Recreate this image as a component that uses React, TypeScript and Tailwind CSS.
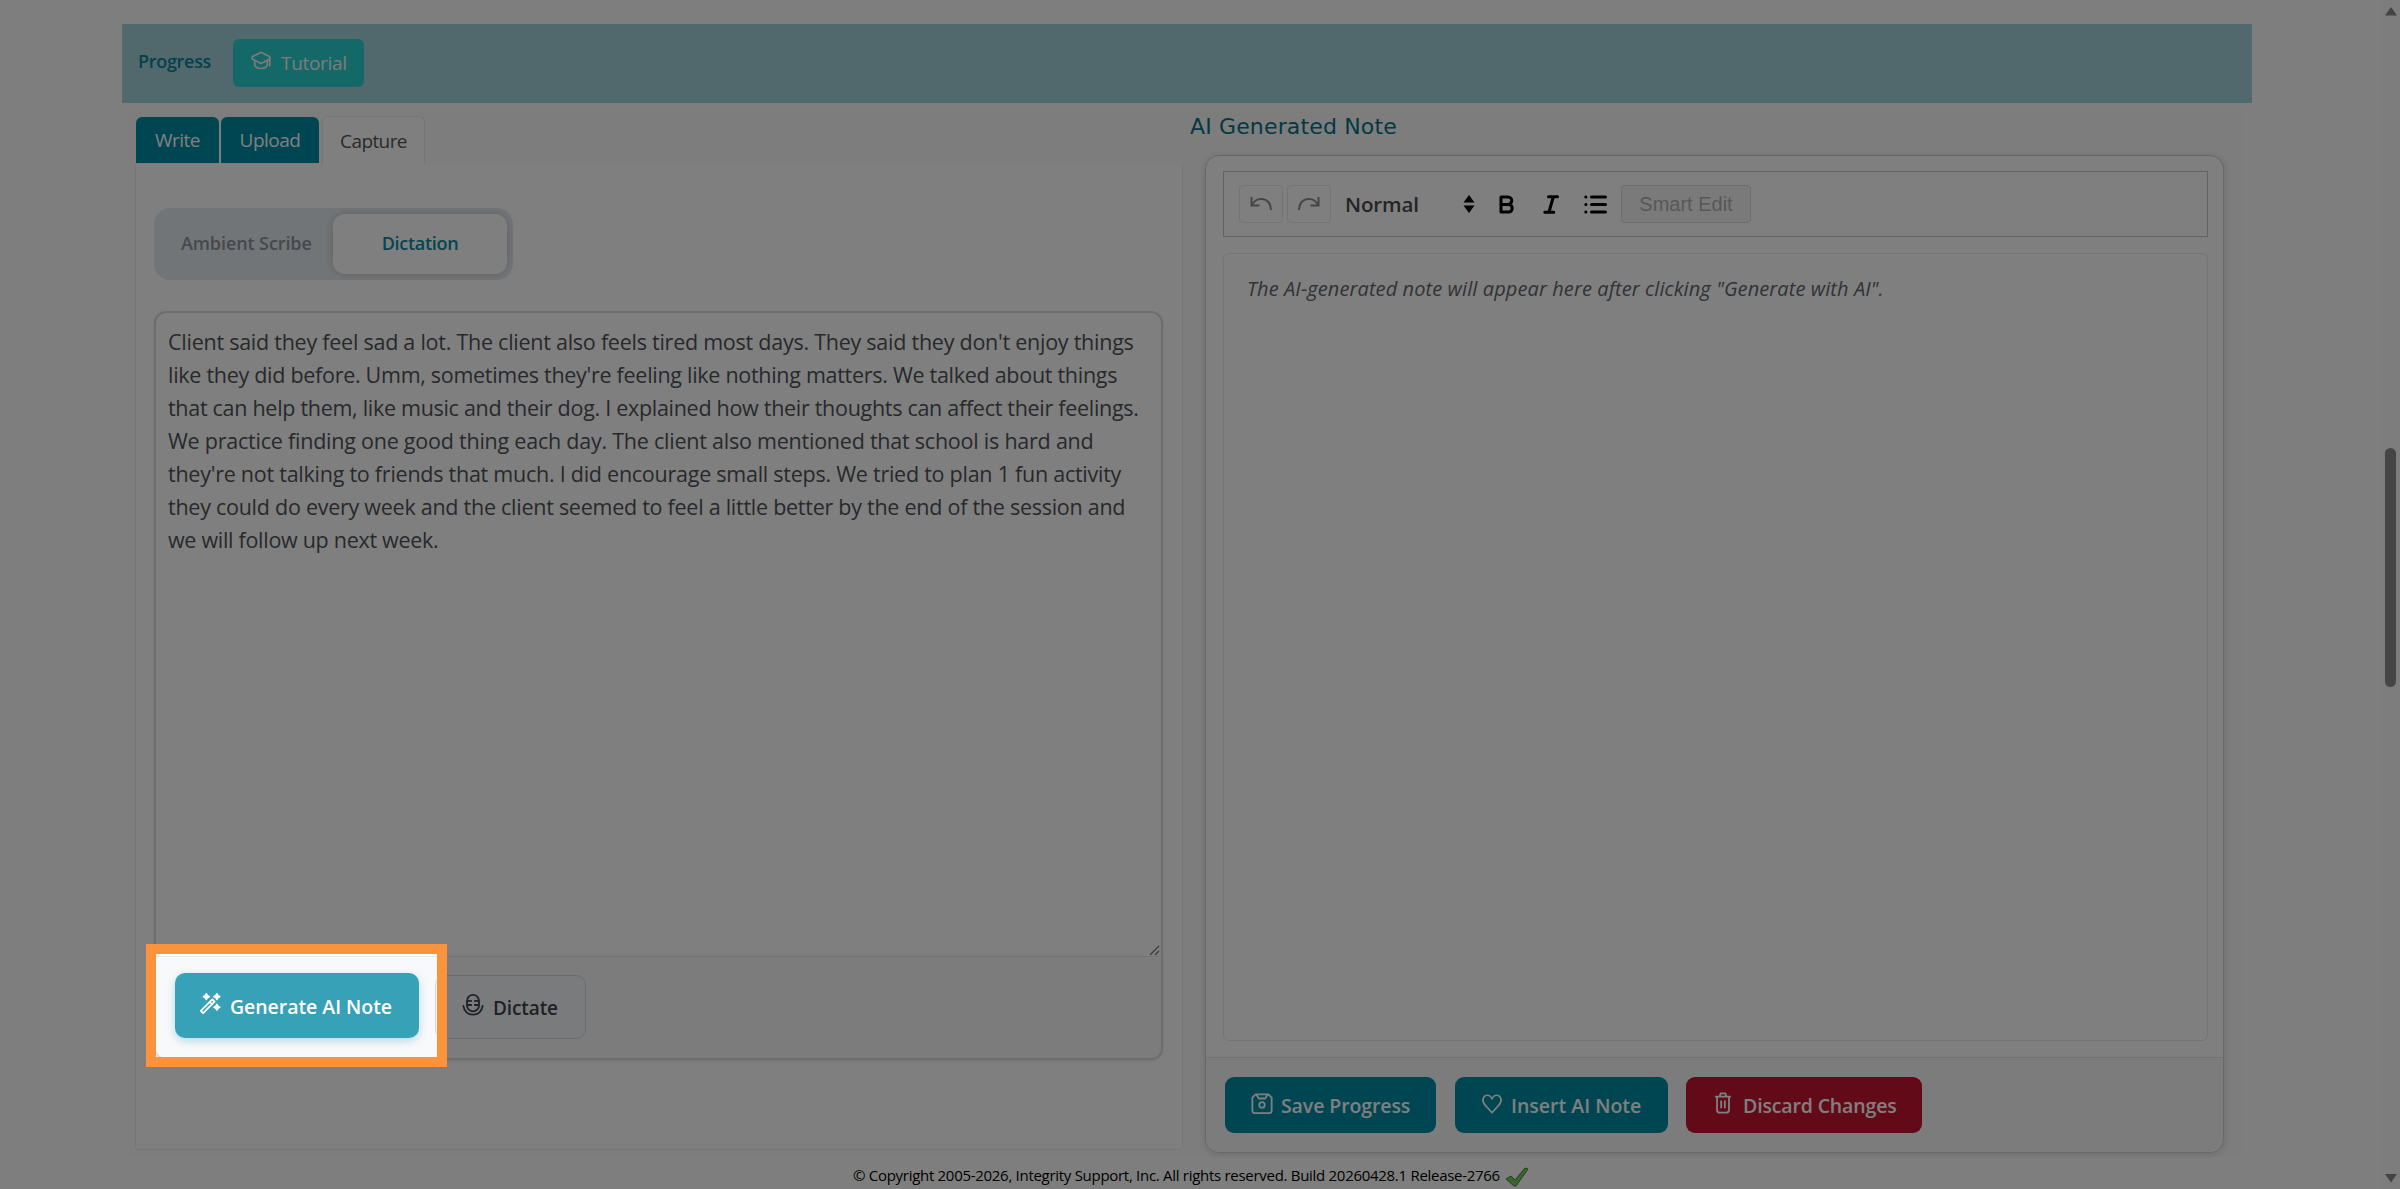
import type { ReactNode } from "react";
import { clsx } from "clsx";

const transcript = [
  { text: "Client said they feel sad a lot. The client also feels tired most days. They said they don't enjoy things", tracking: "tracking-[-0.25px]" },
  { text: "like they did before. Umm, sometimes they're feeling like nothing matters. We talked about things", tracking: "tracking-[-0.285px]" },
  { text: "that can help them, like music and their dog. I explained how their thoughts can affect their feelings.", tracking: "tracking-[-0.29px]" },
  { text: "We practice finding one good thing each day. The client also mentioned that school is hard and", tracking: "tracking-[-0.23px]" },
  { text: "they're not talking to friends that much. I did encourage small steps. We tried to plan 1 fun activity", tracking: "tracking-[-0.25px]" },
  { text: "they could do every week and the client seemed to feel a little better by the end of the session and", tracking: "tracking-[-0.26px]" },
  { text: "we will follow up next week.", tracking: "tracking-[-0.29px]" },
];

interface IconProps {
  className?: string;
  children: ReactNode;
}

function Icon({ className, children }: IconProps) {
  return (
    <svg
      viewBox="0 0 24 24"
      fill="none"
      stroke="currentColor"
      strokeWidth="2"
      strokeLinecap="round"
      strokeLinejoin="round"
      className={clsx("shrink-0", className)}
    >
      {children}
    </svg>
  );
}

function TopBar() {
  return (
    <div className="flex h-[79px] shrink-0 items-start bg-[#a2d2da] pl-4">
      <span className="mt-[23px] w-[74px] whitespace-nowrap text-[18px] font-semibold leading-7 tracking-[-0.3px] text-[#0b8298]">
        Progress
      </span>
      <button className="mt-[15px] ml-[21px] flex h-12 w-[131px] rounded-md bg-[#28d0d0] pl-[18px] text-[#fdf6f0]">
        <Icon className="mt-3 size-5">
          <path d="M12 1.500 22.500 7v11M12 1.500 1.500 7v2.500L12 15l10.500-5.500V7" />
          <path d="M4.500 12v5c1 2.500 4 4 7.500 4s6.500-1.500 7.500-4v-5" />
        </Icon>
        <span className="mt-[10px] ml-[10px] whitespace-nowrap text-[19px] leading-7 tracking-[-0.3px]">Tutorial</span>
      </button>
    </div>
  );
}

function Tabs() {
  return (
    <div className="flex h-12 items-start gap-[2px] pl-px text-[19px] text-white">
      <div className="mt-px flex h-[46px] w-[83px] items-center justify-center rounded-t-md bg-[#008ca4] tracking-[-0.5px]">Write</div>
      <div className="mt-px flex h-[46px] w-[98px] items-center justify-center rounded-t-md bg-[#008ca4] tracking-[-0.5px]">Upload</div>
      <div className="ml-px h-[49px] w-[103px] shrink-0 rounded-t-md border border-b-0 border-[#ebebeb] bg-white pt-[10px] text-center leading-7 tracking-[-0.6px] text-[#555]">
        Capture
      </div>
    </div>
  );
}

function CapturePanel() {
  return (
    <section className="mt-[6px] ml-[7px] w-[1048px] shrink-0">
      <Tabs />
      <div className="h-[986px] rounded-b-[4px] border border-t-0 border-[#ececec] bg-white pt-11 pl-[18px]">
        <div className="flex h-[72px] w-[359px] items-center justify-between rounded-2xl bg-[#e5eaee] pr-[6px] pl-[27px] text-[18px] font-semibold">
          <span className="mb-px whitespace-nowrap tracking-[-0.1px] text-[#8b919c]">Ambient Scribe</span>
          <div className="mb-px flex h-[60px] w-[174px] items-center justify-center rounded-xl bg-white tracking-[-0.3px] text-[#078ba5] shadow-[0_0_8px_rgba(0,0,0,0.18)]">
            Dictation
          </div>
        </div>

        <div className="mt-[31px] flex h-[749px] w-[1009px] flex-col overflow-hidden rounded-xl border-2 border-[#d8dbde] bg-white shadow-[0_1px_3px_rgba(0,0,0,0.1)]">
          <div className="relative h-[643px] pt-3 pl-3 text-[21.5px] leading-[33.07px] text-[#4f5358]">
            {transcript.map((line) => (
              <div key={line.text} className={clsx("whitespace-nowrap", line.tracking)}>
                {line.text}
              </div>
            ))}
            <svg viewBox="0 0 12 12" className="absolute right-0 bottom-0 size-3" stroke="#777" strokeWidth="1.3">
              <path d="M1 11 10 2M6 11l4-4" />
            </svg>
          </div>
          <div className="flex grow items-start border-t border-[#e6e8ea] bg-[#f8f9fb] pt-4 pl-[19px]">
            <button className="flex h-[65px] w-[244px] rounded-[10px] bg-[#36a1b7] pl-6 text-white shadow-[0_3px_8px_rgba(54,161,183,0.35)]">
              <Icon className="mt-5 size-[22px]">
                <path d="M2 19.500 14.500 7l2.500 2.500L4.500 22z M12 10l2.500 2.500" />
                <path
                  d="M8 1l1 2 2 1-2 1-1 2-1-2-2-1 2-1zM19.500 1l1 2 2 1-2 1-1 2-1-2-2-1 2-1zM19.500 12.500l1 2 2 1-2 1-1 2-1-2-2-1 2-1z"
                  fill="currentColor"
                />
              </Icon>
              <span className="mt-5 ml-[9px] whitespace-nowrap text-[19.5px] font-semibold leading-7 tracking-[-0.05px]">
                Generate AI Note
              </span>
            </button>
            <button className="mt-[2px] ml-4 flex h-[64px] w-[151px] rounded-[10px] border border-[#d5d8de] bg-[#f5f7f9] pl-[26px] text-[#3e434c]">
              <Icon className="mt-[18px] size-[22px]">
                <rect x="5.500" y="1" width="13" height="18" rx="6.500" />
                <path d="M1.500 13c1 6 5 9.500 10.500 9.500S21.500 19 22.500 13M6 7.500h4M6 12h4M14 7.500h4M14 12h4" />
              </Icon>
              <span className="mt-[18px] ml-[9px] text-[19px] font-semibold leading-7 tracking-[-0.1px]">Dictate</span>
            </button>
          </div>
        </div>
      </div>
    </section>
  );
}

function Toolbar() {
  return (
    <div className="flex h-[66px] shrink-0 items-center border border-[#c4c4c4] pl-[15px] text-black">
      <button className="flex h-[38px] w-11 items-center justify-center rounded-[4px] border border-[#e8e8e8] text-[#8c8c8c]">
        <svg viewBox="0 0 22 16" className="h-4 w-[22px]" fill="none" stroke="currentColor" strokeWidth="2">
          <path d="M1.500 1v8.500h8M2 9C6 .5 20 0 21 14" />
        </svg>
      </button>
      <button className="ml-1 flex h-[38px] w-11 items-center justify-center rounded-[4px] border border-[#e8e8e8] text-[#8c8c8c]">
        <svg viewBox="0 0 22 16" className="h-4 w-[22px]" fill="none" stroke="currentColor" strokeWidth="2">
          <path d="M20.500 1v8.500h-8M20 9C16 .5 2 0 1 14" />
        </svg>
      </button>
      <span className="ml-[14px] w-[118px] text-[20.5px] font-semibold tracking-[-0.1px] text-[#4a4a4a]">Normal</span>
      <svg viewBox="0 0 12 18" className="h-[18px] w-3" fill="currentColor">
        <path d="M6 0l5.500 7.500H.5zM6 18l5.500-7.500H.5z" />
      </svg>
      <svg viewBox="0 0 16 19" className="ml-6 h-[19px] w-4" fill="none" stroke="currentColor" strokeWidth="3" strokeLinejoin="round">
        <path d="M2 2h7a3.600 3.600 0 0 1 0 7.500H2zM2 9.500h8a3.800 3.800 0 0 1 0 7.500H2z" />
      </svg>
      <svg viewBox="0 0 16 19" className="ml-[28px] h-[19px] w-4" fill="none" stroke="currentColor" strokeWidth="3" strokeLinecap="round">
        <path d="M5.500 1.800h9M1.800 17.200h9M10.300 2 6 17" />
      </svg>
      <svg viewBox="0 0 23 19" className="ml-[25px] h-[19px] w-[23px]" fill="none" stroke="currentColor" strokeWidth="3" strokeLinecap="round">
        <path d="M7.500 2h14M7.500 9.500h14M7.500 17h14M1.800 2h.1M1.800 9.500h.1M1.800 17h.1" />
      </svg>
      <button className="ml-[14px] flex h-[38px] w-[130px] items-center justify-center rounded-[4px] border border-[#d8d8d8] bg-[#f5f5f5] font-['Liberation_Sans',sans-serif] text-[20px] text-[#b0b0b0]">
        Smart Edit
      </button>
    </div>
  );
}

function NotePanel() {
  return (
    <section className="ml-[7px] w-[1034px]">
      <h2 className="mt-px whitespace-nowrap font-['DejaVu_Sans',sans-serif] text-[22px] leading-8 tracking-[0.15px] text-[#067286]">
        AI Generated Note
      </h2>
      <div className="mt-3 ml-[15px] flex h-[998px] w-[1019px] flex-col overflow-hidden rounded-[14px] border border-[#ccd0d3] bg-white shadow-[0_1px_6px_rgba(0,0,0,0.14)]">
        <div className="flex h-[901px] shrink-0 flex-col pt-[15px] pr-[15px] pl-[17px]">
          <Toolbar />
          <div className="mt-4 h-[788px] shrink-0 rounded-md border border-[#e8e8e8] pt-[19px] pl-[23px] text-[20px] italic leading-8 tracking-[0.1px] text-[#62666c]">
            The AI-generated note will appear here after clicking "Generate with AI".
          </div>
        </div>
        <div className="flex grow items-start border-t border-[#e2e4e6] bg-[#f8f8f8] pt-[19px] pl-[19px] text-[19.5px] font-semibold leading-7 text-white">
          <button className="flex h-14 w-[211px] rounded-[9px] bg-[#008ca4] pl-[26px]">
            <Icon className="mt-4 size-[22px]">
              <path d="M5 1.500h14l3.500 3.500v14a3 3 0 0 1-3 3h-15a3 3 0 0 1-3-3V5z" />
              <path d="M6 2l2.500 4h7L18 2" />
              <circle cx="12" cy="13" r="3" />
            </Icon>
            <span className="mt-[15px] ml-2 whitespace-nowrap tracking-[-0.1px]">Save Progress</span>
          </button>
          <button className="ml-[19px] flex h-14 w-[213px] rounded-[9px] bg-[#008ca4] pl-[26px]">
            <Icon className="mt-[17px] h-[20px] w-[22px]">
              <path d="M12 22.500 3 12.500C-1 7 2 1.500 6.500 1.500c3 0 4.500 2 5.500 4.500 1-2.500 2.500-4.500 5.500-4.500C22 1.500 25 7 21 12.500z" />
            </Icon>
            <span className="mt-[15px] ml-2 whitespace-nowrap">Insert AI Note</span>
          </button>
          <button className="ml-[18px] flex h-14 w-[236px] rounded-[9px] bg-[#c41430] pl-[26px]">
            <Icon className="mt-[15px] size-[22px]">
              <path d="M4 5h16M8.500 4.500l1-3h5l1 3M5.500 5.500v14a3 3 0 0 0 3 3h7a3 3 0 0 0 3-3v-14M10 10v7M14 10v7" />
            </Icon>
            <span className="mt-[15px] ml-[9px] whitespace-nowrap tracking-[-0.15px]">Discard Changes</span>
          </button>
        </div>
      </div>
    </section>
  );
}

function Footer() {
  return (
    <footer className="flex grow items-start pt-[6px] pl-[731px] text-[15px] leading-6 text-black">
      <span className="whitespace-nowrap tracking-[-0.29px]">
        © Copyright 2005-2026, Integrity Support, Inc. All rights reserved. Build 20260428.1 Release-2766
      </span>
      <svg viewBox="0 0 24 20" className="mt-1 ml-[5px] h-5 w-6">
        <path d="M1 12l5-3 4 4L20 1l3 1-12 17H9z" fill="#76c963" stroke="#3f7f38" />
      </svg>
    </footer>
  );
}

function Scrollbar() {
  return (
    <div className="flex w-[19px] shrink-0 flex-col items-center bg-[#fbfbfb]">
      <svg viewBox="0 0 12 9" className="mt-[7px] h-[9px] w-3" fill="#888">
        <path d="M6 0l6 8.500H0z" />
      </svg>
      <div className="mt-[432px] h-[239px] w-[11px] rounded-full bg-[#8b8b8b]" />
      <svg viewBox="0 0 12 9" className="mt-[487px] h-[9px] w-3" fill="#888">
        <path d="M6 8.500l6-8.500H0z" />
      </svg>
    </div>
  );
}

export default function App() {
  return (
    <div className="relative flex h-[1189px] w-[2400px] overflow-hidden bg-[#fdfdfd] font-['Open_Sans','Noto_Sans',sans-serif]">
      <div className="flex grow flex-col pt-6 pl-[122px]">
        <div className="flex w-[2130px] grow flex-col">
          <TopBar />
          <main className="mt-[7px] ml-[6px] flex h-[1047px] w-[2115px] shrink-0 bg-[#fafafa]">
            <CapturePanel />
            <NotePanel />
          </main>
          <Footer />
        </div>
      </div>
      <Scrollbar />

      {/* tour spotlight: the shadow dims everything around the highlighted button */}
      <div className="pointer-events-none absolute top-[944px] left-[146px] h-[123px] w-[301px] border-[10px] border-[#fb923c] shadow-[0_0_0_2600px_rgba(0,0,0,0.5)]" />
    </div>
  );
}
